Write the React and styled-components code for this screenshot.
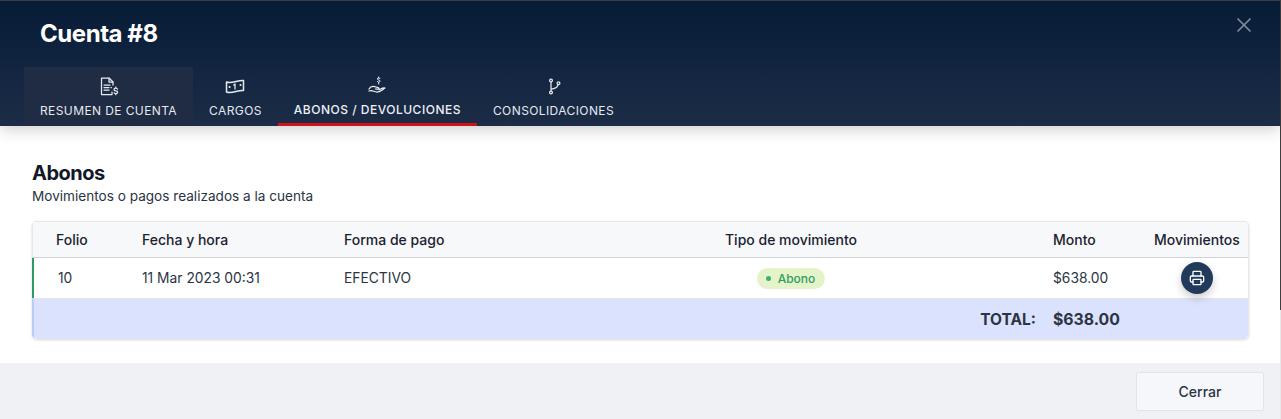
import React from "react";
import styled, { createGlobalStyle } from "styled-components";
import { Printer, X } from "lucide-react";

const GlobalStyle = createGlobalStyle`
  html, body {
    margin: 0;
    height: 419px;
    overflow: hidden;
    background: linear-gradient(#3f3f3f 0, #3f3f3f 310px, #e8e8e8 310px);
    font-family: Inter, "Liberation Sans", sans-serif;
    -webkit-font-smoothing: antialiased;
  }
`;

const Dialog = styled.div`
  width: 1280px;
  height: 418px;
  margin-top: 1px;
  display: flex;
  flex-direction: column;
  background: #fff;
`;

const Header = styled.header`
  height: 125px;
  flex: none;
  display: flex;
  flex-direction: column;
  position: relative;
  z-index: 1;
  background: linear-gradient(#071c37, #1c2c47);
  box-shadow: 0 4px 14px rgba(0, 0, 0, 0.18);
`;

const TitleRow = styled.div`
  height: 66px;
  flex: none;
  display: flex;
  justify-content: space-between;
  padding: 15px 22px 0 40px;
  box-sizing: border-box;
`;

const Title = styled.h1`
  margin: 0;
  font-size: 24px;
  line-height: 36px;
  font-weight: 700;
  letter-spacing: -0.45px;
  color: #fff;
`;

const CloseButton = styled.button`
  width: 28px;
  height: 28px;
  margin-top: -5px;
  padding: 0;
  display: flex;
  align-items: center;
  justify-content: center;
  border: 0;
  background: none;
  color: #7f8b9c;
`;

const Tabs = styled.nav`
  display: flex;
  padding-left: 24px;
  flex: 1;
`;

const Tab = styled.div`
  display: flex;
  flex-direction: column;
  align-items: center;
  padding: ${(p) => (p.$active ? "7px" : "8px")} 16px 0;
  box-sizing: border-box;
  color: ${(p) => (p.$active ? "#eef0f4" : "#e6e9ee")};
  background: ${(p) => (p.$hover ? "#1f2c44" : "transparent")};
  border-bottom: 3px solid ${(p) => (p.$active ? "#d0121b" : "transparent")};
`;

const TabIcon = styled.svg`
  width: 22px;
  height: 22px;
  fill: none;
  stroke: currentColor;
  stroke-width: 1.25;
  stroke-linecap: round;
  stroke-linejoin: round;
`;

const TabLabel = styled.span`
  margin-top: 6px;
  font-size: 12px;
  line-height: 16px;
  font-weight: ${(p) => (p.$active ? 500 : 400)};
  letter-spacing: ${(p) => (p.$active ? "0.5px" : "0.4px")};
  white-space: nowrap;
`;

const Content = styled.main`
  flex: 1;
  padding: 35px 31px 0 32px;
`;

const Heading = styled.h2`
  margin: 0;
  font-size: 20px;
  line-height: 24px;
  font-weight: 700;
  letter-spacing: -0.5px;
  color: #111827;
`;

const Subheading = styled.p`
  margin: 1px 0 15px;
  font-size: 13.6px;
  line-height: 20px;
  color: #2a3342;
`;

const Card = styled.section`
  border-radius: 5px;
  overflow: hidden;
  border: 1px solid #e5e7eb;
  border-left: 0;
  border-bottom: 0;
  box-shadow: 0 1px 3px rgba(0, 0, 0, 0.16);
`;

const Row = styled.div`
  display: grid;
  grid-template-columns: ${(p) => p.$first}px 202px 233px 476px 101px 1fr;
  align-items: center;
  box-sizing: border-box;
`;

const HeadRow = styled(Row)`
  height: 36px;
  background: #f7f8fa;
  border-left: 1px solid #e5e7eb;
  border-bottom: 1px solid #cfd2d8;
`;

const BodyRow = styled(Row)`
  height: 40px;
  border-left: 2px solid #2e9c62;
`;

const HeadCell = styled.div`
  padding-left: ${(p) => (p.$center ? 0 : `${p.$pad ?? 24}px`)};
  text-align: ${(p) => (p.$center ? "center" : "left")};
  font-size: 14px;
  line-height: 20px;
  font-weight: 500;
  color: #1a2230;
  white-space: nowrap;
`;

const Cell = styled.div`
  padding-left: ${(p) => p.$pad ?? 24}px;
  display: ${(p) => (p.$center ? "flex" : "block")};
  justify-content: center;
  font-size: 13.8px;
  color: #2b3443;
  white-space: nowrap;
`;

const Badge = styled.span`
  display: inline-flex;
  align-items: center;
  gap: 7px;
  height: 21px;
  padding: 0 10px 0 9px;
  border-radius: 11px;
  background: #e4f3ca;
  color: #2f9e5f;
  font-size: 12px;
  font-weight: 500;
`;

const Dot = styled.span`
  width: 5px;
  height: 5px;
  border-radius: 50%;
  background: #38b26f;
`;

const PrintButton = styled.button`
  width: 32px;
  height: 32px;
  margin-left: 51px;
  padding: 0;
  display: flex;
  align-items: center;
  justify-content: center;
  border: 0;
  border-radius: 50%;
  background: #213a5c;
  color: #fff;
  box-shadow: 0 4px 8px rgba(0, 0, 0, 0.2);
`;

const TotalRow = styled.div`
  height: 41px;
  display: flex;
  align-items: center;
  justify-content: flex-end;
  padding-right: 127px;
  background: #dbe2fd;
  border-left: 2px solid #bccbf8;
  border-top: 1px solid #e3e5ea;
  box-sizing: border-box;
  color: #2b3443;
  font-weight: 700;
  font-size: 15.5px;
`;

const TotalAmount = styled.span`
  width: 68px;
  margin-left: 17px;
  font-size: 15.8px;
`;

const Footer = styled.footer`
  height: 56px;
  flex: none;
  display: flex;
  justify-content: flex-end;
  align-items: flex-start;
  padding: 9px 16px 0 0;
  box-sizing: border-box;
  background: #f0f1f5;
`;

const CloseAction = styled.button`
  width: 128px;
  height: 39px;
  border: 1px solid #e1e4e9;
  border-radius: 2px;
  background: #f5f7fb;
  font-family: inherit;
  font-size: 14px;
  font-weight: 500;
  color: #2b3443;
`;

const InvoiceIcon = () => (
  <TabIcon viewBox="0 0 22 22">
    <path d="M14 17v2.500H3.500V3H11l4 4v3" />
    <path d="M11 3v4h4" />
    <path d="M6 10h6M6 12.500h5M6 15h5M13 12.500h.5" />
    <path d="M19.500 14c-.4-.6-1-.9-1.700-.9-1 0-1.800.6-1.800 1.400s.8 1.300 1.800 1.400c1 .1 1.800.6 1.800 1.400s-.8 1.400-1.800 1.400c-.7 0-1.400-.3-1.700-.9M17.800 12v1M17.800 18.700v1" />
  </TabIcon>
);

const CashIcon = () => (
  <TabIcon viewBox="0 0 22 22">
    <path d="M2.500 7c5.500 2 11-2 17-1.500v10c-6-.5-11.500 3.500-17 1.500z" strokeWidth="1.500" />
    <path d="M11 9v5M9.800 10 11 9" />
    <path d="M5.500 12h.1M16.500 10h.1" strokeWidth="2" />
  </TabIcon>
);

const HandIcon = () => (
  <TabIcon viewBox="0 0 22 22">
    <path d="M14 4.500c-.3-.5-.8-.7-1.300-.7-.8 0-1.300.5-1.300 1.100s.5 1 1.300 1.100c.8.100 1.300.5 1.300 1.100s-.5 1.100-1.300 1.100c-.5 0-1-.2-1.300-.7M12.700 3v1M12.700 8.800v1.200" strokeWidth="1" />
    <path d="M3 15c2-3.500 4.500-3 7-2 1.500.6 3 .6 3 1.400 0 .8-1.500 1-3.500.6" />
    <path d="M3 17c3-1.500 5 1 8 1 3.500 0 5.500-2.500 8-4-2.500-.2-4 .8-6 1.700" />
  </TabIcon>
);

const BranchIcon = () => (
  <TabIcon viewBox="0 0 22 22" strokeWidth="1.250">
    <circle cx="8" cy="5.500" r="1.400" />
    <circle cx="8" cy="17.500" r="1.400" />
    <circle cx="15.500" cy="8.300" r="1.400" />
    <path d="M8 7v9M8 14c3.500 0 6.500-1.500 7-4.300" />
  </TabIcon>
);

export default function App() {
  return (
    <>
      <GlobalStyle />
      <Dialog>
        <Header>
          <TitleRow>
            <Title>Cuenta #8</Title>
            <CloseButton>
              <X size={24} strokeWidth={1.75} />
            </CloseButton>
          </TitleRow>
          <Tabs>
            <Tab $hover>
              <InvoiceIcon />
              <TabLabel>RESUMEN DE CUENTA</TabLabel>
            </Tab>
            <Tab>
              <CashIcon />
              <TabLabel>CARGOS</TabLabel>
            </Tab>
            <Tab $active>
              <HandIcon />
              <TabLabel $active>ABONOS / DEVOLUCIONES</TabLabel>
            </Tab>
            <Tab>
              <BranchIcon />
              <TabLabel>CONSOLIDACIONES</TabLabel>
            </Tab>
          </Tabs>
        </Header>
        <Content>
          <Heading>Abonos</Heading>
          <Subheading>Movimientos o pagos realizados a la cuenta</Subheading>
          <Card>
            <HeadRow $first={85}>
              <HeadCell $pad={23}>Folio</HeadCell>
              <HeadCell>Fecha y hora</HeadCell>
              <HeadCell>Forma de pago</HeadCell>
              <HeadCell $center>Tipo de movimiento</HeadCell>
              <HeadCell>Monto</HeadCell>
              <HeadCell>Movimientos</HeadCell>
            </HeadRow>
            <BodyRow $first={84}>
              <Cell>10</Cell>
              <Cell>11 Mar 2023 00:31</Cell>
              <Cell>EFECTIVO</Cell>
              <Cell $center $pad={0}>
                <Badge>
                  <Dot />
                  Abono
                </Badge>
              </Cell>
              <Cell>$638.00</Cell>
              <Cell $pad={0}>
                <PrintButton>
                  <Printer size={16} strokeWidth={2} />
                </PrintButton>
              </Cell>
            </BodyRow>
            <TotalRow>
              TOTAL:
              <TotalAmount>$638.00</TotalAmount>
            </TotalRow>
          </Card>
        </Content>
        <Footer>
          <CloseAction>Cerrar</CloseAction>
        </Footer>
      </Dialog>
    </>
  );
}
